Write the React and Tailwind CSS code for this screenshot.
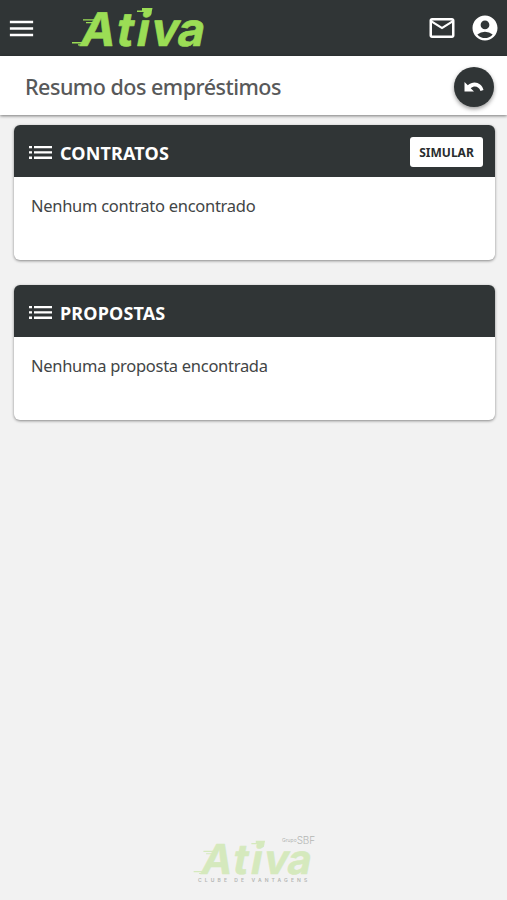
import React from "react";
import { MdMenu, MdMailOutline, MdAccountCircle } from "react-icons/md";

function AtivaLogo({ className }) {
  return (
    <svg className={className} viewBox="60 -4 160 64" fill="currentColor">
      <g transform="translate(0 45.5) skewX(-11)">
        <text
          x="78.500 114.500 134.500 149 175.500"
          y="0"
          fontFamily="Inter, sans-serif"
          fontSize="46.500"
          fontWeight="700"
          stroke="currentColor"
          strokeWidth="0.6"
          strokeLinejoin="round"
        >
          Ativa
        </text>
      </g>
      <path d="M83 19.2h12v1.4H83zM86 22h9v1.3h-9zM72 42h11v1.5H72zM78 44.3h8v1.3h-8zM137 10.6h9v1.4h-9zM142 8h10.500l-1.500 7h-7l.5-4.500h-2.500z" />
    </svg>
  );
}

function ListIcon() {
  return (
    <svg className="h-[15px] w-[23px]" viewBox="0 0 23 15" fill="currentColor">
      <path d="M0 1h3v2.300H0zM5 1h18v2.300H5zM0 6.300h3v2.300H0zM5 6.300h18v2.300H5zM0 11.600h3v2.300H0zM5 11.600h18v2.300H5z" />
    </svg>
  );
}

function UndoIcon() {
  return (
    <svg className="h-[12px] w-[20px]" viewBox="0 0 20 12" fill="currentColor">
      <path d="M.5 1v9.500H10L6.700 7.200C10.500 4.200 15 5.600 16.500 10l3-1C17.700 2 10 -1 3.800 4.300z" />
    </svg>
  );
}

function Card({ title, message, action }) {
  return (
    <section className="h-[135px] overflow-hidden rounded-[6px] bg-white shadow-[0_1px_3px_rgba(0,0,0,0.45)]">
      <div className="flex h-[52px] items-center bg-[#303536] pl-[15px] pr-3 pt-[2px] text-white">
        <ListIcon />
        <h2 className="ml-2 flex-1 pt-[2px] text-[18px] font-bold leading-6 tracking-[0.15px]">{title}</h2>
        {action && (
          <button className="h-[30px] w-[73px] rounded-[3px] bg-white pt-px text-[12px] font-bold text-[#292d2e]">
            {action}
          </button>
        )}
      </div>
      <p className="pl-[17px] pt-[17px] text-[16.500px] leading-6 tracking-[-0.28px] text-[#424546]">{message}</p>
    </section>
  );
}

export default function App() {
  return (
    <div className="flex h-[900px] w-full flex-col overflow-hidden bg-[#f2f2f2] font-['Noto_Sans',sans-serif]">
      <header className="flex h-14 shrink-0 items-center bg-[#303536] text-white">
        <MdMenu className="ml-[6px] size-[31px]" />
        <AtivaLogo className="ml-[23px] h-16 w-40 text-[#9bdd55]" />
        <div className="ml-auto flex items-center gap-[13px] pr-[7px]">
          <MdMailOutline className="size-[30px]" />
          <MdAccountCircle className="size-[30px]" />
        </div>
      </header>
      <div className="flex h-[59px] shrink-0 items-center justify-between bg-white pl-[25px] pr-[13px] shadow-[0_1px_3px_rgba(0,0,0,0.5)]">
        <h1 className="pt-[3px] text-[21.500px] font-medium tracking-[-0.5px] text-[#58595a]">Resumo dos empréstimos</h1>
        <button className="mt-[2px] flex size-10 items-center justify-center rounded-full bg-[#303536] text-white shadow-[0_2px_4px_rgba(0,0,0,0.4)]">
          <UndoIcon />
        </button>
      </div>
      <main className="flex flex-1 flex-col gap-[25px] pl-[14px] pr-3 pt-[10px]">
        <Card title="CONTRATOS" message="Nenhum contrato encontrado" action="SIMULAR" />
        <Card title="PROPOSTAS" message="Nenhuma proposta encontrada" />
      </main>
      <footer className="relative flex h-[70px] shrink-0 flex-col items-center">
        <AtivaLogo className="h-[57px] w-[142px] text-[#d5e9bd]" />
        <p className="absolute left-[282px] top-[4px] flex items-center font-['Inter',sans-serif] leading-[12px] text-[#b4b6b4]">
          <span className="text-[5px]">Grupo</span>
          <span className="text-[10px] font-light tracking-[-0.1px]">SBF</span>
        </p>
        <p className="absolute left-[198px] top-[47px] whitespace-nowrap font-['Inter',sans-serif] text-[5px] font-semibold leading-[7px] tracking-[3.100px] text-[#b4b6b4]">
          CLUBE DE VANTAGENS
        </p>
      </footer>
    </div>
  );
}
